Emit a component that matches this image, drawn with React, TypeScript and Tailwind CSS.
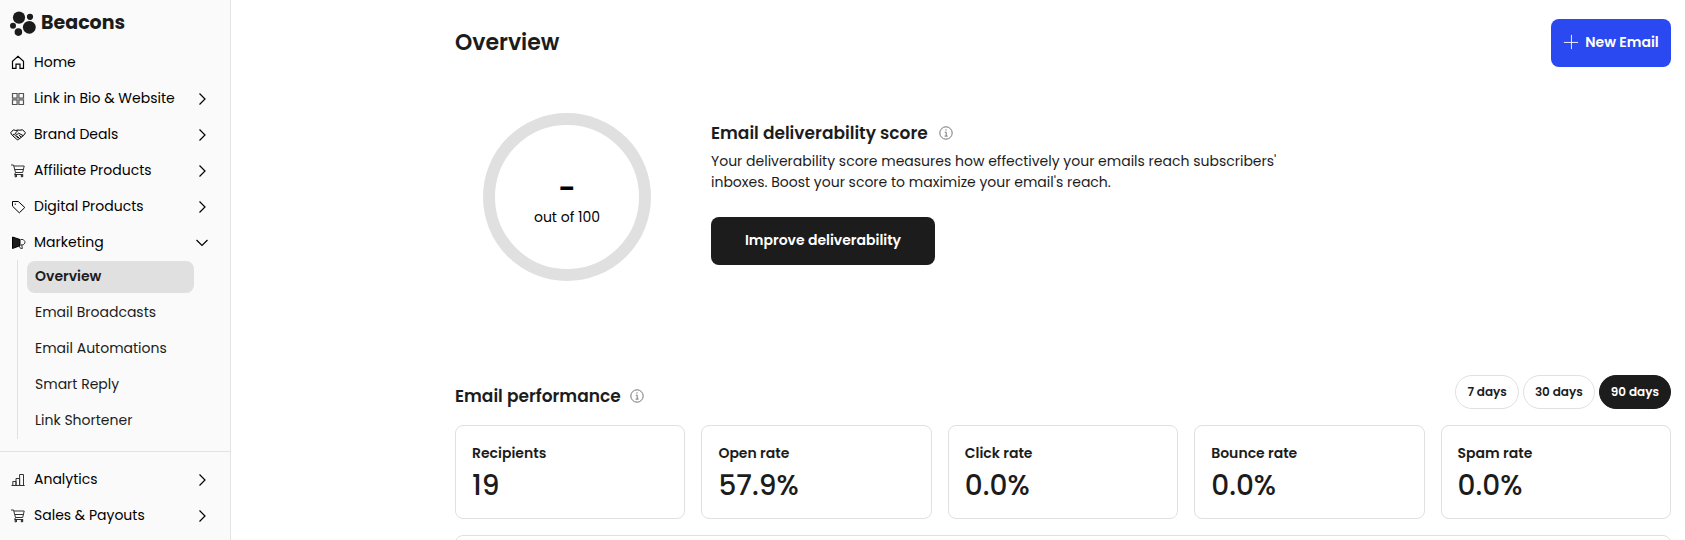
import React from "react";

type IconProps = { className?: string };

function Stroke({ children, className = "size-4" }: { children: React.ReactNode; className?: string }) {
  return (
    <svg viewBox="0 0 16 16" className={`${className} shrink-0`} fill="none" stroke="currentColor" strokeWidth="1" aria-hidden="true">
      {children}
    </svg>
  );
}

const HomeIcon = () => (
  <Stroke>
    <path strokeWidth="1.2" d="M2.5 14.4V7.2L8 2.4l5.5 4.8v7.2H10v-4.2H6v4.2z" />
  </Stroke>
);
const GridIcon = () => (
  <Stroke>
    <path stroke="#555555" strokeWidth="1.2" d="M2.5 3.5h4.6v4.6H2.5zM8.9 3.5h4.6v4.6H8.9zM2.5 9.9h4.6v4.6H2.5zM8.9 9.9h4.6v4.6H8.9z" />
  </Stroke>
);
const HandshakeIcon = () => (
  <Stroke>
    <path d="M3.4 3.8.6 6.8 2.4 9.4l4.4 4c.6.5 1.3.5 1.8 0l5-4 1.9-2.6-2.9-3-3 .4-1.8-.2-2 .5zM8 4.5 5.2 7.3c.5 1.5 2.3 1.3 3.4-.1l4.7 2.5M8.8 9.1l2.6 2.1M7.2 10.3l2.4 2.2M2.4 9.4l1.7-1.1 1.4 1.4 1.3.3.4 1.4 1.1.9" />
  </Stroke>
);
const CartIcon = () => (
  <Stroke>
    <path stroke="#333333" d="M1 3h2.5l2 7.5h7.2l1.5-6.5H4M4.6 7.5h8.9M5.5 10.5l-.9 2h8.6" />
    <circle cx="5.8" cy="14" r=".9" />
    <circle cx="12" cy="14" r=".9" />
  </Stroke>
);
const TagIcon = () => (
  <Stroke>
    <path d="M2.5 3.5h5.8l6.5 6-5.5 5.3-6.8-6.6z" />
    <circle cx="5.3" cy="6.1" r=".7" fill="currentColor" stroke="none" />
  </Stroke>
);
const MegaphoneIcon = () => (
  <Stroke>
    <path d="M2.5 3 10 5.5v6.2l-7.5 2.8z" fill="#1c1c1c" />
    <path stroke="#333333" d="M10.5 5.5h2.7l1.7 2v1.6l-1.7 1.8h-2.7M9.2 12l1.3 2.4h1.9l-.7-3.5" />
  </Stroke>
);
const ChartIcon = () => (
  <Stroke>
    <path stroke="#333333" d="M1.5 14.5h13.2M2.8 14.5v-4h3.2M6 14.5v-7h3.6M9.6 14.5v-11h3.9v11M6 10.5v4M9.6 7.5v7" />
  </Stroke>
);
const InfoIcon = () => (
  <svg viewBox="0 0 16 16" className="size-4 text-[#777777]" fill="none" stroke="currentColor" aria-hidden="true">
    <circle cx="8" cy="8" r="6.2" />
    <path d="M6.8 7.2h1.4v3.9M6.6 11.1h3" />
    <circle cx="8" cy="4.9" r=".7" fill="currentColor" stroke="none" />
  </svg>
);
const Logo = ({ className }: IconProps) => (
  <svg viewBox="0 0 26 26" className={className} fill="currentColor" aria-hidden="true">
    <circle cx="9" cy="7.6" r="6.1" />
    <circle cx="20" cy="6.8" r="3.1" />
    <circle cx="3" cy="15.8" r="3" />
    <circle cx="19.3" cy="17.3" r="6.4" />
    <circle cx="8.4" cy="22.1" r="3.8" />
  </svg>
);

function NavItem({ icon, label, open }: { icon: React.ReactNode; label: string; open?: boolean }) {
  return (
    <li>
      <a href="#" className="flex h-9 items-center gap-2 pr-5 pl-[10px]">
        {icon}
        <span className="flex-1">{label}</span>
        {open !== undefined && (
          <Stroke>
            <path strokeWidth="1.2" d={open ? "M2.5 6 8 11.5 13.5 6" : "M5.5 3.5 11 9l-5.5 5.5"} />
          </Stroke>
        )}
      </a>
    </li>
  );
}

const subItems = ["Overview", "Email Broadcasts", "Email Automations", "Smart Reply", "Link Shortener"];
const stats = [
  ["Recipients", "19"],
  ["Open rate", "57.9%"],
  ["Click rate", "0.0%"],
  ["Bounce rate", "0.0%"],
  ["Spam rate", "0.0%"],
];
const ranges = ["7 days", "30 days", "90 days"];

export default function App() {
  return (
    <div className="flex h-screen overflow-hidden bg-white font-[Poppins,Inter,sans-serif] text-sm text-[#1c1c1c]">
      <aside className="w-[231px] shrink-0 border-r border-[#e3e3e3] bg-[#fafafa]">
        <a href="#" className="flex h-11 items-center gap-[5px] pt-[2px] pl-[10px] text-[19px] font-bold">
          <Logo className="size-[26px]" />
          Beacons
        </a>
        <nav className="text-black">
          <ul>
            <NavItem icon={<HomeIcon />} label="Home" />
            <NavItem icon={<GridIcon />} label="Link in Bio & Website" open={false} />
            <NavItem icon={<HandshakeIcon />} label="Brand Deals" open={false} />
            <NavItem icon={<CartIcon />} label="Affiliate Products" open={false} />
            <NavItem icon={<TagIcon />} label="Digital Products" open={false} />
            <NavItem icon={<MegaphoneIcon />} label="Marketing" open={true} />
          </ul>
          <ul className="mr-9 ml-[17px] flex flex-col gap-1 border-l border-[#e0e0e0] pt-px pb-[2px] pl-[9px] text-[#1c1c1c]">
            {subItems.map((s, i) => (
              <li key={s}>
                <a
                  href="#"
                  className={`flex h-8 items-center rounded-lg pb-[2px] pl-2 ${i === 0 ? "bg-[#e0e0e0] font-semibold" : ""}`}
                >
                  {s}
                </a>
              </li>
            ))}
          </ul>
          <ul className="mt-3 border-t border-[#e3e3e3] pt-[9px]">
            <NavItem icon={<ChartIcon />} label="Analytics" open={false} />
            <NavItem icon={<CartIcon />} label="Sales & Payouts" open={false} />
          </ul>
        </nav>
      </aside>

      <main className="min-w-0 flex-1 overflow-hidden pt-[19px] pr-[14px] pl-56">
        <header className="flex h-12 items-center justify-between">
          <h1 className="text-[22px] font-semibold">Overview</h1>
          <button className="flex h-12 w-30 items-center justify-center gap-[6px] rounded-lg bg-[#2a49f0] pb-[2px] font-semibold text-white">
            <svg viewBox="0 0 18 18" className="size-4" stroke="currentColor" aria-hidden="true">
              <path d="M9.5 1v16M1 9.5h16" />
            </svg>
            New Email
          </button>
        </header>

        <section className="mt-[46px] flex gap-[60px] pl-7">
          <div className="flex size-42 shrink-0 flex-col items-center justify-center rounded-full border-12 border-[#e0e0e0] pt-1 text-black">
            <span className="text-3xl font-semibold">-</span>
            <span>out of 100</span>
          </div>
          <div className="pt-[6px]">
            <h2 className="flex items-center gap-[10px] text-[17px]/7 font-semibold">
              Email deliverability score
              <InfoIcon />
            </h2>
            <p className="mt-1 max-w-[570px] leading-[21px]">
              Your deliverability score measures how effectively your emails reach subscribers' inboxes. Boost your
              score to maximize your email's reach.
            </p>
            <button className="mt-6 h-12 w-56 rounded-lg bg-[#1c1c1c] pb-[2px] font-semibold text-white">
              Improve deliverability
            </button>
          </div>
        </section>

        <section className="mt-[94px]">
          <div className="flex items-end justify-between">
            <h2 className="flex items-center gap-2 text-[17px]/[26px] font-semibold">
              Email performance
              <InfoIcon />
            </h2>
            <div className="flex gap-1">
              {ranges.map((r, i) => (
                <button
                  key={r}
                  className={`h-[34px] rounded-full border px-[11px] text-xs font-semibold ${
                    i === 2 ? "border-[#1c1c1c] bg-[#1c1c1c] text-white" : "border-[#e0e0e0]"
                  }`}
                >
                  {r}
                </button>
              ))}
            </div>
          </div>
          <div className="mt-4 grid grid-cols-5 gap-4">
            {stats.map(([label, value]) => (
              <div key={label} className="h-[94px] rounded-lg border border-[#e0e0e0] px-4 pt-[17px]">
                <div className="leading-[21px] font-semibold">{label}</div>
                <div className="mt-1 text-[28px] leading-9 font-medium">{value}</div>
              </div>
            ))}
          </div>
          <div className="mt-4 h-80 rounded-lg border border-[#e0e0e0]" />
        </section>
      </main>
    </div>
  );
}
